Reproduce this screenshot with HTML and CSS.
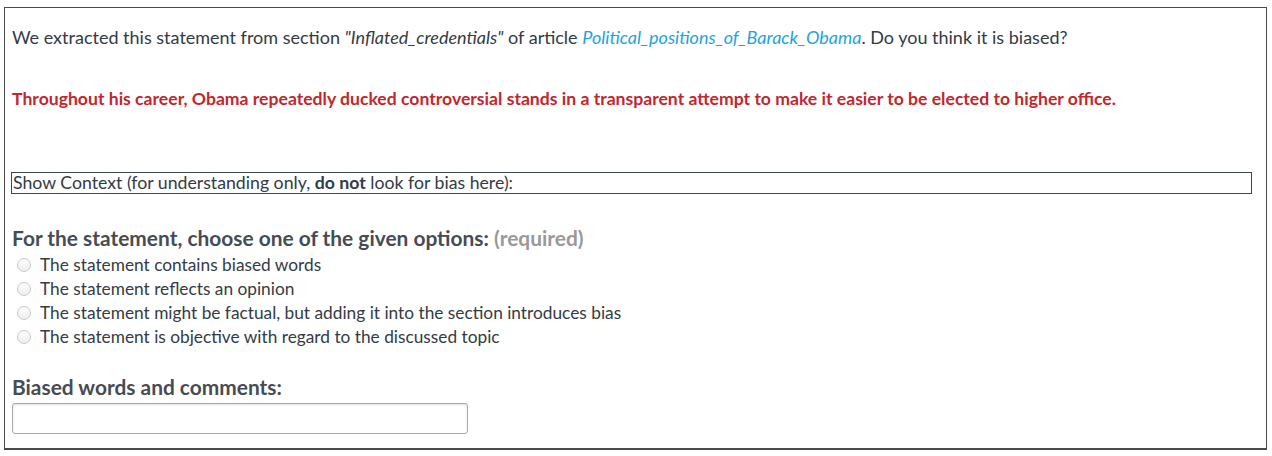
FILE: index.html
```html
<!DOCTYPE html>
<html>
<head>
<meta charset="utf-8">
<link rel="stylesheet" href="styles.css">
</head>
<body>
<div class="task">
  <p class="intro">We extracted this statement from section <em>"Inflated_credentials"</em> of article <a class="article" href="#"><em>Political_positions_of_Barack_Obama</em></a>. Do you think it is biased?</p>
  <p class="statement">Throughout his career, Obama repeatedly ducked controversial stands in a transparent attempt to make it easier to be elected to higher office.</p>
  <div class="context">Show Context (for understanding only, <b>do not</b> look for bias here):</div>
  <h3 class="question">For the statement, choose one of the given options: <span class="req">(required)</span></h3>
  <ul class="options">
    <li class="option"><span class="radio"></span>The statement contains biased words</li>
    <li class="option"><span class="radio"></span>The statement reflects an opinion</li>
    <li class="option"><span class="radio"></span>The statement might be factual, but adding it into the section introduces bias</li>
    <li class="option"><span class="radio"></span>The statement is objective with regard to the discussed topic</li>
  </ul>
  <h3 class="question comments">Biased words and comments:</h3>
  <div class="textbox"></div>
</div>
</body>
</html>
```
FILE: styles.css
```css
html, body {
  margin: 0;
  padding: 0;
  background: #fff;
}
body {
  padding: 7px 5px 6px 4px;
  font-family: Lato, "Open Sans", sans-serif;
  color: #333b44;
}
.task {
  box-sizing: border-box;
  height: 443px;
  border: 1px solid #4a4a4a;
  border-bottom: 2px solid #4a4a4a;
  padding: 19px 14px 0 7px;
}
.intro {
  margin: 0;
  font-size: 18px;
  line-height: 20px;
}
.intro em {
  font-style: italic;
}
.article {
  color: #1ea4dd;
  text-decoration: none;
}
.statement {
  margin: 42px 0 0;
  font-size: 17.6px;
  line-height: 20px;
  font-weight: 700;
  color: #c1272d;
}
.context {
  margin: 63px 0 0 -1px;
  border: 1px solid #3e4650;
  font-size: 17.7px;
  line-height: 20px;
  padding-left: 1px;
}
.question {
  margin: 32px 0 0;
  font-size: 20.9px;
  line-height: 24px;
  font-weight: 700;
  color: #464c53;
}
.req {
  color: #999;
}
.options {
  list-style: none;
  margin: 2px 0 0;
  padding: 0;
}
.option {
  display: flex;
  align-items: center;
  height: 24px;
  font-size: 17.3px;
}
.radio {
  box-sizing: border-box;
  flex: none;
  width: 14px;
  height: 14px;
  margin: 2px 9px 0 5px;
  border: 1px solid #c8c8c8;
  border-radius: 50%;
  background: linear-gradient(#fff, #ededed);
}
.comments {
  margin-top: 27px;
}
.textbox {
  box-sizing: border-box;
  width: 456px;
  height: 31px;
  margin-top: 4px;
  border: 1px solid #a9a9a9;
  border-radius: 3px;
  box-shadow: inset 0 1px 2px rgba(0,0,0,0.12);
}
```
